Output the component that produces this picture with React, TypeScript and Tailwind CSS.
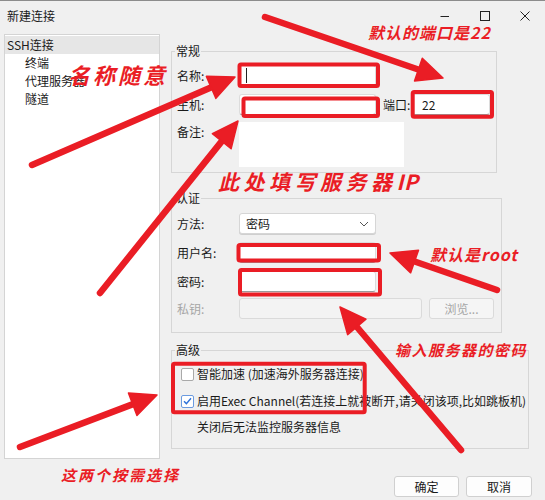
import React from "react";

const RED = "#ea1d25";

type Pt = [number, number];

// Arrow from tail to tip, with a filled triangular head.
function Arrow({ from, tip, len = 26, half = 12 }: { from: Pt; tip: Pt; len?: number; half?: number }) {
  const dx = tip[0] - from[0];
  const dy = tip[1] - from[1];
  const d = Math.hypot(dx, dy);
  const ux = dx / d;
  const uy = dy / d;
  const bx = tip[0] - ux * len;
  const by = tip[1] - uy * len;
  const px = -uy;
  const py = ux;
  const pts = `${tip[0]},${tip[1]} ${bx + px * half},${by + py * half} ${bx - px * half},${by - py * half}`;
  return (
    <g>
      <line x1={from[0]} y1={from[1]} x2={bx + ux * 6} y2={by + uy * 6} stroke={RED} strokeWidth={6.5} strokeLinecap="round" />
      <polygon points={pts} fill={RED} stroke={RED} strokeWidth={1.5} strokeLinejoin="round" />
    </g>
  );
}

function Group({ title, className, children }: { title: string; className: string; children: React.ReactNode }) {
  return (
    <fieldset className={`border border-[#d6d6d6] ${className}`}>
      <legend className="ml-[3px] px-[1px] text-[12px] leading-[16px] text-[#1a1a1a]">{title}</legend>
      {children}
    </fieldset>
  );
}

function Label({ children, muted }: { children: React.ReactNode; muted?: boolean }) {
  return (
    <span className={`w-[62px] shrink-0 text-[12px] leading-[16px] ${muted ? "text-[#a6a6a6]" : "text-[#1a1a1a]"}`}>{children}</span>
  );
}

function Field({ className, children }: { className: string; children?: React.ReactNode }) {
  return (
    <div className={`h-[21px] rounded-[3px] border border-[#dcdcdc] border-b-[#9a9a9a] bg-white flex items-center ${className}`}>
      {children}
    </div>
  );
}

function CheckBox({ checked }: { checked?: boolean }) {
  return (
    <span
      className={`w-[13px] h-[13px] shrink-0 rounded-[2px] border bg-white flex items-center justify-center ${
        checked ? "border-[#6b9be0]" : "border-[#a9a9a9]"
      }`}
    >
      {checked && (
        <svg width="9" height="8" viewBox="0 0 9 8">
          <path d="M1 4.2 L3.4 6.6 L8 1.2" fill="none" stroke="#2f73d9" strokeWidth="1.4" />
        </svg>
      )}
    </span>
  );
}

export default function App() {
  const note = "absolute font-bold italic leading-none whitespace-nowrap text-[#ea1d25]";
  return (
    <div className="relative w-[545px] h-[500px] overflow-hidden bg-[#f0f0f0] font-['Noto_Sans_CJK_SC',sans-serif] text-[12px] text-[#1a1a1a]">
      {/* title bar */}
      <div className="h-[31px] border-t border-[#8c8c8c] flex items-center">
        <span className="pl-[7px] leading-[16px]">新建连接</span>
        <div className="ml-auto flex">
          <div className="w-[40px] h-[30px] flex items-center justify-center">
            <svg width="10" height="10" viewBox="0 0 10 10">
              <line x1="0.5" y1="5.5" x2="9" y2="5.5" stroke="#222" strokeWidth="1" />
            </svg>
          </div>
          <div className="w-[40px] h-[30px] flex items-center justify-center">
            <svg width="10" height="10" viewBox="0 0 10 10">
              <rect x="0.5" y="0.5" width="9" height="9" fill="none" stroke="#222" strokeWidth="1" />
            </svg>
          </div>
          <div className="w-[40px] h-[30px] flex items-center justify-center">
            <svg width="10" height="10" viewBox="0 0 10 10">
              <path d="M0.5 0.5 L9.5 9.5 M9.5 0.5 L0.5 9.5" stroke="#222" strokeWidth="1" />
            </svg>
          </div>
        </div>
      </div>

      {/* body */}
      <div className="mt-[3px] pl-[4px] flex items-start">
        {/* navigation tree */}
        <div className="w-[156px] h-[425px] shrink-0 border border-[#d4d4d4] bg-white pt-[1px]">
          <div className="h-[18px] bg-[#e6e6e6] pl-[2px] flex items-center leading-[16px]">SSH连接</div>
          <div className="pl-[20px] flex flex-col leading-[18px]">
            <span>终端</span>
            <span>代理服务器</span>
            <span>隧道</span>
          </div>
        </div>

        {/* settings column */}
        <div className="ml-[11px] pt-[9px] flex flex-col">
          <Group title="常规" className="w-[326px]">
            <div className="pl-[5px] pt-[6px] pb-[5px] flex flex-col">
              <div className="h-[21px] flex items-center">
                <Label>名称:</Label>
                <Field className="w-[137px] pl-[6px]">
                  <span className="w-[1px] h-[15px] bg-[#222]" />
                </Field>
              </div>
              <div className="mt-[8px] h-[21px] flex items-center">
                <Label>主机:</Label>
                <Field className="w-[137px]" />
                <span className="ml-[7px] w-[29px] leading-[16px]">端口:</span>
                <Field className="w-[78px] pl-[9px]">
                  <span className="leading-[16px]">22</span>
                </Field>
              </div>
              <div className="mt-[7px] flex items-start">
                <span className="mt-[2px] w-[62px] shrink-0 leading-[16px]">备注:</span>
                <div className="w-[165px] h-[45px] bg-white" />
              </div>
            </div>
          </Group>

          <Group title="认证" className="mt-[17px] w-[331px]">
            <div className="pl-[5px] pt-[7px] pb-[13px] flex flex-col">
              <div className="h-[21px] flex items-center">
                <Label>方法:</Label>
                <div className="w-[137px] h-[21px] rounded-[3px] border border-[#d6d6d6] bg-white flex items-center pl-[6px] pr-[6px] shadow-[0_1px_0_#cfcfcf]">
                  <span className="leading-[16px]">密码</span>
                  <svg className="ml-auto" width="10" height="6" viewBox="0 0 10 6">
                    <path d="M1 1 L5 5 L9 1" fill="none" stroke="#555" strokeWidth="1" />
                  </svg>
                </div>
              </div>
              <div className="mt-[8px] h-[21px] flex items-center">
                <Label>用户名:</Label>
                <Field className="w-[137px]" />
              </div>
              <div className="mt-[8px] h-[21px] flex items-center">
                <Label>密码:</Label>
                <Field className="w-[137px]" />
              </div>
              <div className="mt-[6px] h-[21px] flex items-center">
                <Label muted>私钥:</Label>
                <div className="w-[183px] h-[21px] rounded-[3px] border border-[#dadada] bg-[#f3f3f3]" />
                <div className="ml-[7px] w-[65px] h-[21px] rounded-[3px] border border-[#dadada] bg-[#f5f5f5] flex items-center justify-center text-[#a6a6a6] leading-[16px]">
                  浏览...
                </div>
              </div>
            </div>
          </Group>

          <Group title="高级" className="mt-[9px] w-[358px]">
            <div className="pl-[9px] pt-[6px] pb-[11px] flex flex-col">
              <div className="h-[20px] flex items-center gap-[3px]">
                <CheckBox />
                <span className="leading-[16px]">智能加速 (加速海外服务器连接)</span>
              </div>
              <div className="mt-[7px] h-[20px] flex items-center gap-[3px]">
                <CheckBox checked />
                <span className="leading-[16px] whitespace-nowrap">启用Exec Channel(若连接上就被断开,请关闭该项,比如跳板机)</span>
              </div>
              <div className="mt-[6px] h-[20px] flex items-center pl-[16px]">
                <span className="leading-[16px]">关闭后无法监控服务器信息</span>
              </div>
            </div>
          </Group>
        </div>
      </div>

      {/* dialog buttons */}
      <div className="mt-[17px] pr-[13px] flex justify-end gap-[7px]">
        <button className="w-[65px] h-[21px] rounded-[3px] border border-[#d0d0d0] bg-[#fdfdfd] text-[12px] leading-[16px]">确定</button>
        <button className="w-[66px] h-[21px] rounded-[3px] border border-[#d0d0d0] bg-[#fdfdfd] text-[12px] leading-[16px]">取消</button>
      </div>

      {/* red markup layer */}
      <svg className="absolute inset-0 pointer-events-none" width="545" height="500" viewBox="0 0 545 500">
        <g fill="none" stroke={RED} strokeWidth="4" strokeLinejoin="round">
          <rect x="239.5" y="64.5" width="138.5" height="21.5" rx="1.5" />
          <rect x="243.5" y="98.5" width="134.5" height="17.5" rx="1.5" />
          <rect x="412.7" y="92" width="79.3" height="24.7" rx="1.5" />
          <rect x="238.5" y="245" width="140.5" height="15.5" rx="1.5" />
          <rect x="240" y="270" width="140" height="24.5" rx="1.5" />
          <rect x="173" y="363.7" width="191.7" height="48.6" rx="1.5" />
        </g>
        <Arrow from={[265, 17]} tip={[443, 78]} />
        <Arrow from={[32, 165]} tip={[235, 77]} />
        <Arrow from={[100, 293]} tip={[238, 121]} />
        <Arrow from={[497, 290]} tip={[390, 253]} />
        <Arrow from={[461, 450]} tip={[340, 307]} />
        <Arrow from={[20, 447]} tip={[157, 395]} />
      </svg>

      <span className={`${note} left-[368px] top-[24px] text-[16px] tracking-[1px]`}>默认的端口是22</span>
      <span className={`${note} left-[68px] top-[63px] text-[22px] tracking-[3px]`}>名称随意</span>
      <span className={`${note} left-[218px] top-[171px] text-[21px] tracking-[4.5px]`}>
        此处填写服务器<span className="tracking-[0.5px]">IP</span>
      </span>
      <span className={`${note} left-[430px] top-[246px] text-[16px] tracking-[1px]`}>默认是root</span>
      <span className={`${note} left-[395px] top-[342px] text-[15px] tracking-[1.5px]`}>输入服务器的密码</span>
      <span className={`${note} left-[61px] top-[467px] text-[15px] tracking-[2px]`}>这两个按需选择</span>
    </div>
  );
}
